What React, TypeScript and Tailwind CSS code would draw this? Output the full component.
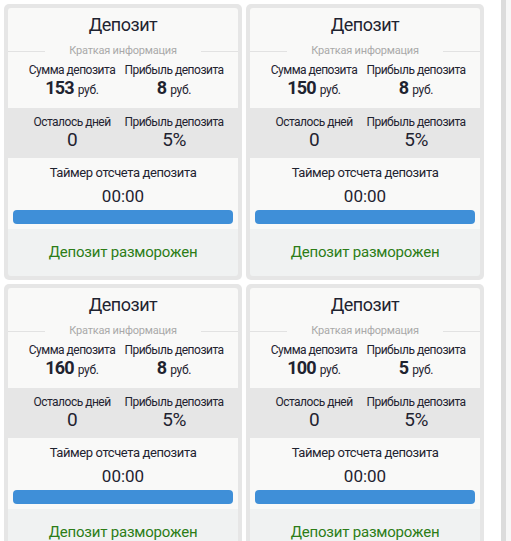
import React from 'react'

const deposits = [
  { sum: 153, profit: 8, days: 0, percent: 5 },
  { sum: 150, profit: 8, days: 0, percent: 5 },
  { sum: 160, profit: 8, days: 0, percent: 5 },
  { sum: 100, profit: 5, days: 0, percent: 5 },
]

function DepositCard({ sum, profit, days, percent }: { sum: number; profit: number; days: number; percent: number }) {
  return (
    <div className="w-[238px] h-[276px] rounded-[5px] bg-[#e6e6e6] p-[4px]">
      <div className="h-full rounded-[3px] overflow-hidden flex flex-col text-[#1f2330] whitespace-nowrap">
        {/* Short info */}
        <div className="h-[100px] bg-[#f9f9f8] pt-[5px]">
          <div className="text-center text-[18px] leading-[24px] tracking-[-0.5px]">Депозит</div>
          <div className="mt-[7px] flex items-center h-[14px]">
            <div className="flex-1 h-px bg-[#e2e2e2]" />
            <div className="px-[24px] text-[11px] leading-[14px] tracking-[-0.2px] text-[#a9a9a9]">Краткая информация</div>
            <div className="flex-1 h-px bg-[#e2e2e2]" />
          </div>
          <div className="mt-[5px] flex justify-center">
            <div className="w-[102px] text-center">
              <div className="text-[12px] leading-[14px] tracking-[-0.5px]">Сумма депозита</div>
              <div className="leading-[22px]">
                <span className="text-[18px] font-bold tracking-[-0.9px]">{sum}</span>
                <span className="text-[12px] ml-[4px] tracking-[-0.3px]">руб.</span>
              </div>
            </div>
            <div className="w-[102px] text-center">
              <div className="text-[12px] leading-[14px] tracking-[-0.5px]">Прибыль депозита</div>
              <div className="leading-[22px]">
                <span className="text-[18px] font-bold tracking-[-0.9px]">{profit}</span>
                <span className="text-[12px] ml-[4px] tracking-[-0.3px]">руб.</span>
              </div>
            </div>
          </div>
        </div>
        {/* Days / percent */}
        <div className="h-[50px] bg-[#e6e6e6] pt-[7px] flex justify-center">
          <div className="w-[102px] text-center">
            <div className="text-[12px] leading-[14px] tracking-[-0.5px]">Осталось дней</div>
            <div className="text-[19px] leading-[22px] tracking-[-0.5px]">{days}</div>
          </div>
          <div className="w-[102px] text-center">
            <div className="text-[12px] leading-[14px] tracking-[-0.5px]">Прибыль депозита</div>
            <div className="text-[19px] leading-[22px] tracking-[-0.5px]">{percent}%</div>
          </div>
        </div>
        {/* Timer */}
        <div className="h-[71px] bg-[#f9f9f8] pt-[7px] px-[5px]">
          <div className="text-center text-[13px] leading-[16px] tracking-[-0.4px]">Таймер отсчета депозита</div>
          <div className="mt-[4px] text-center text-[17px] leading-[22px]">00:00</div>
          <div className="mt-[3px] h-[14px] rounded-[4px] bg-[#3f8fd8]" />
        </div>
        {/* Status */}
        <div className="flex-1 bg-[#f0f2f2] flex items-center justify-center text-[15px] tracking-[-0.2px] text-[#2c7d17]">
          Депозит разморожен
        </div>
      </div>
    </div>
  )
}

export default function App() {
  return (
    <div className="w-[511px] h-[541px] overflow-hidden flex bg-white font-['Roboto',sans-serif]">
      <div className="w-[501px] p-[4px]">
        <div className="grid grid-cols-[238px_238px] gap-[4px]">
          {deposits.map((d, i) => (
            <DepositCard key={i} {...d} />
          ))}
        </div>
      </div>
      <div className="w-[5px] h-full bg-[#dcdcdc]" />
      <div className="w-[5px] h-full bg-[#f7f7f7]" />
    </div>
  )
}
